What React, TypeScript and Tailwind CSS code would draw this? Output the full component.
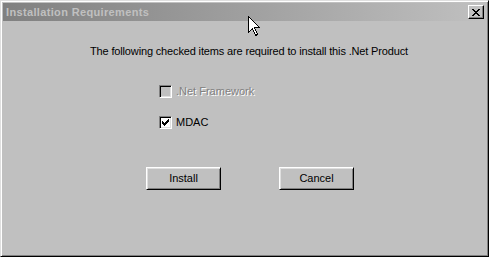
import React from "react";

const font = { fontFamily: '"Liberation Sans", Arial, sans-serif' };

function Button({ label }: { label: string }) {
  return (
    <div className="w-[75px] h-[23px] bg-[#c0c0c0] border border-t-white border-l-white border-r-black border-b-black shadow-[inset_1px_1px_#dfdfdf,inset_-1px_-1px_#808080] flex items-center justify-center text-[11px] text-black leading-[13px]">
      {label}
    </div>
  );
}

function Checkbox({ checked, disabled }: { checked: boolean; disabled?: boolean }) {
  return (
    <div
      className={`w-[13px] h-[13px] border border-t-[#808080] border-l-[#808080] border-r-white border-b-white shadow-[inset_1px_1px_#000,inset_-1px_-1px_#dfdfdf] flex items-center justify-center ${
        disabled ? "bg-[#c0c0c0]" : "bg-white"
      }`}
    >
      {checked && (
        <svg width="7" height="7" viewBox="0 0 7 7" shapeRendering="crispEdges">
          <path
            d="M0 2h1v3h-1zM1 3h1v3h-1zM2 4h1v3h-1zM3 3h1v3h-1zM4 2h1v3h-1zM5 1h1v3h-1zM6 0h1v3h-1z"
            fill="#000"
          />
        </svg>
      )}
    </div>
  );
}

export default function App() {
  return (
    <div
      className="relative w-[489px] h-[257px] bg-[#c0c0c0] border border-t-[#dfdfdf] border-l-[#dfdfdf] border-r-black border-b-black shadow-[inset_1px_1px_#fff,inset_-1px_-1px_#808080] p-[2px] flex flex-col"
      style={font}
    >
      <div className="h-[18px] bg-gradient-to-r from-[#808080] to-[#c0c0c0] flex items-center justify-between pl-[3px] pr-[2px]">
        <span className="text-[11px] font-bold text-[#c0c0c0] leading-[13px] tracking-[0.35px]">
          Installation Requirements
        </span>
        <div className="w-[16px] h-[14px] bg-[#c0c0c0] border border-t-white border-l-white border-r-black border-b-black shadow-[inset_-1px_-1px_#808080] flex items-center justify-center">
          <svg width="8" height="7" viewBox="0 0 8 7" shapeRendering="crispEdges">
            <path
              d="M0 0h2v1h-2zM6 0h2v1h-2zM1 1h2v1h-2zM5 1h2v1h-2zM2 2h4v1h-4zM3 3h2v1h-2zM2 4h4v1h-4zM1 5h2v1h-2zM5 5h2v1h-2zM0 6h2v1h-2zM6 6h2v1h-2z"
              fill="#000"
            />
          </svg>
        </div>
      </div>

      <div className="flex flex-col text-[11px] leading-[13px] text-black">
        <div className="mt-[24px] ml-[87px] tracking-[-0.15px]">
          The following checked items are required to install this .Net Product
        </div>
        <div className="mt-[27px] ml-[156px] flex items-center gap-[4px]">
          <Checkbox checked={false} disabled />
          <span className="text-[#808080] [text-shadow:1px_1px_#fff]">.Net Framework</span>
        </div>
        <div className="mt-[18px] ml-[156px] flex items-center gap-[4px]">
          <Checkbox checked />
          <span>MDAC</span>
        </div>
        <div className="mt-[38px] ml-[143px] flex gap-[58px]">
          <Button label="Install" />
          <Button label="Cancel" />
        </div>
      </div>

      <svg
        className="absolute left-[247px] top-[15px]"
        width="12"
        height="20"
        viewBox="0 0 12 20"
        shapeRendering="crispEdges"
      >
        <path
          d="M0.5 0.5 L0.5 16.5 L4.5 12.5 L7.5 19.5 L9.5 18.5 L6.5 11.5 L11.5 11.5 Z"
          fill="#fff"
          stroke="#000"
          strokeWidth="1"
        />
      </svg>
    </div>
  );
}
